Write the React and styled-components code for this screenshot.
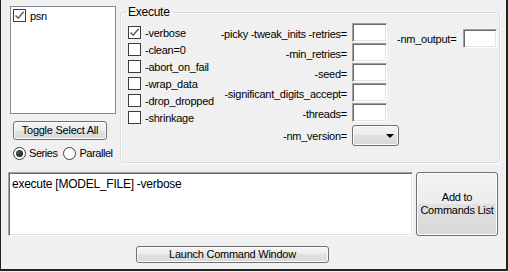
import React from 'react';
import styled, { createGlobalStyle } from 'styled-components';

const GlobalStyle = createGlobalStyle`
  html, body {
    margin: 0;
    padding: 0;
    background: #f0f0f0;
  }
  body {
    font-family: "Liberation Sans", Arial, sans-serif;
    font-size: 11px;
    letter-spacing: -0.25px;
    color: #000;
  }
`;

const buttonFace = 'linear-gradient(#f4f4f4 0%, #ececec 50%, #e1e1e1 50%, #d8d8d8 100%)';

const Frame = styled.div`
  box-sizing: border-box;
  width: 508px;
  height: 271px;
  padding-left: 7px;
  background: #f0f0f0;
  border-left: 1px solid #222;
  border-right: 2px solid #222;
  border-bottom: 2px solid #222;
`;

const TopRow = styled.div`
  display: flex;
  align-items: flex-start;
  height: 163px;
`;

const LeftCol = styled.div`
  flex: none;
  width: 112px;
  padding-top: 6px;
  display: flex;
  flex-direction: column;
`;

const ListBox = styled.div`
  box-sizing: border-box;
  width: 106px;
  height: 108px;
  margin-left: 2px;
  padding: 1px 2px;
  background: #fff;
  border: 1px solid #828790;
`;

const ListItem = styled.label`
  display: flex;
  align-items: center;
  gap: 4px;
  height: 15px;
`;

const Box = styled.span`
  box-sizing: border-box;
  flex: none;
  width: 13px;
  height: 13px;
  border: 1px solid #3c3c3c;
  background: #fff;
  display: flex;
  align-items: center;
  justify-content: center;
`;

const Button = styled.div`
  box-sizing: border-box;
  display: flex;
  flex-direction: column;
  align-items: center;
  justify-content: center;
  width: ${({ w }) => w}px;
  height: ${({ h }) => h}px;
  border: 1px solid #707070;
  border-radius: 3px;
  background: ${buttonFace};
  box-shadow: inset 0 0 0 1px #fcfcfc;
  line-height: 13px;
  text-align: center;
  white-space: nowrap;
`;

const ToggleButton = styled(Button)`
  margin: 7px 0 0 5px;
`;

const RadioRow = styled.div`
  display: flex;
  align-items: center;
  gap: 6px;
  margin: 6px 0 0 5px;
  height: 14px;
  white-space: nowrap;
  letter-spacing: -0.45px;
`;

const RadioItem = styled.label`
  display: flex;
  align-items: center;
  gap: 3px;
`;

const RadioCircle = styled.span`
  box-sizing: border-box;
  flex: none;
  width: 13px;
  height: 13px;
  border-radius: 50%;
  border: 1px solid #3c3c3c;
  background: #fff;
  display: flex;
  align-items: center;
  justify-content: center;

  &::after {
    content: '';
    display: ${({ checked }) => (checked ? 'block' : 'none')};
    width: 7px;
    height: 7px;
    border-radius: 50%;
    background: radial-gradient(circle at 35% 35%, #555, #111);
  }
`;

const GroupBox = styled.fieldset`
  box-sizing: border-box;
  flex: none;
  width: 380px;
  height: 158px;
  min-width: 0;
  margin: 5px 0 0 0;
  padding: 0;
  border: 1px solid #d5dfe5;
  border-radius: 3px;
  box-shadow: inset 1px 1px 0 #fff, 1px 1px 0 #fff;
`;

const Legend = styled.legend`
  margin-left: 5px;
  padding: 0 2px;
  font-size: 12px;
  line-height: 14px;
`;

const GroupBody = styled.div`
  display: flex;
  align-items: flex-start;
  padding-left: 7px;
  white-space: nowrap;
`;

const CheckCol = styled.div`
  width: 87px;
  margin-top: 7px;
  display: flex;
  flex-direction: column;
  gap: 4px;
`;

const CheckRow = styled.label`
  display: flex;
  align-items: center;
  gap: 4px;
  height: 13px;
`;

const ParamGrid = styled.div`
  display: grid;
  grid-template-columns: 132px 35px;
  grid-template-rows: repeat(5, 20px) 23px;
  column-gap: 5px;
  margin-top: 4px;
`;

const ParamLabel = styled.span`
  align-self: center;
  text-align: right;
  padding-top: 2px;
`;

const TextBox = styled.div`
  box-sizing: border-box;
  flex: none;
  width: ${({ w }) => w}px;
  height: ${({ h }) => h}px;
  background: #fff;
  border-top: 1px solid #a0a0a0;
  border-left: 1px solid #a0a0a0;
  border-right: 1px solid #fff;
  border-bottom: 1px solid #fff;
  box-shadow: inset 1px 1px 0 #696969, inset -1px -1px 0 #e3e3e3;
`;

const ParamBox = styled(TextBox)`
  align-self: start;
`;

const Dropdown = styled.div`
  box-sizing: border-box;
  align-self: end;
  width: 47px;
  height: 21px;
  border: 1px solid #707070;
  border-radius: 3px;
  background: ${buttonFace};
  box-shadow: inset 0 0 0 1px #fcfcfc;
  display: flex;
  align-items: center;
  justify-content: flex-end;
  padding-right: 4px;
`;

const Arrow = styled.span`
  width: 0;
  height: 0;
  border-left: 4px solid transparent;
  border-right: 4px solid transparent;
  border-top: 4px solid #000;
`;

const OutputField = styled.div`
  display: flex;
  align-items: center;
  gap: 7px;
  margin: 10px 0 0 10px;
`;

const BottomRow = styled.div`
  display: flex;
  gap: 3px;
  margin-top: 9px;
`;

const CommandBox = styled(TextBox)`
  padding: 4px 3px;
  font-size: 12px;
  line-height: 14px;
`;

const LaunchButton = styled(Button)`
  margin: 10px 0 0 128px;
`;

const Check = ({ checked }) => (
  <Box>
    {checked && (
      <svg width="11" height="11" viewBox="0 0 11 11">
        <path d="M1.5 5.5 L4.2 8.3 L9.6 1.8" fill="none" stroke="#5a5a5a" strokeWidth="1.4" />
      </svg>
    )}
  </Box>
);

const flags = [
  { name: '-verbose', checked: true },
  { name: '-clean=0' },
  { name: '-abort_on_fail' },
  { name: '-wrap_data' },
  { name: '-drop_dropped' },
  { name: '-shrinkage' },
];

const params = [
  '-picky -tweak_inits -retries=',
  '-min_retries=',
  '-seed=',
  '-significant_digits_accept=',
  '-threads=',
];

const App = () => (
  <>
    <GlobalStyle />
    <Frame>
      <TopRow>
        <LeftCol>
          <ListBox>
            <ListItem>
              <Check checked />
              psn
            </ListItem>
          </ListBox>
          <ToggleButton w={94} h={19}>Toggle Select All</ToggleButton>
          <RadioRow>
            <RadioItem>
              <RadioCircle checked />
              Series
            </RadioItem>
            <RadioItem>
              <RadioCircle />
              Parallel
            </RadioItem>
          </RadioRow>
        </LeftCol>
        <GroupBox>
          <Legend>Execute</Legend>
          <GroupBody>
            <CheckCol>
              {flags.map(f => (
                <CheckRow key={f.name}>
                  <Check checked={f.checked} />
                  {f.name}
                </CheckRow>
              ))}
            </CheckCol>
            <ParamGrid>
              {params.map(p => (
                <React.Fragment key={p}>
                  <ParamLabel>{p}</ParamLabel>
                  <ParamBox w={35} h={19} />
                </React.Fragment>
              ))}
              <ParamLabel>-nm_version=</ParamLabel>
              <Dropdown>
                <Arrow />
              </Dropdown>
            </ParamGrid>
            <OutputField>
              <span>-nm_output=</span>
              <TextBox w={34} h={19} />
            </OutputField>
          </GroupBody>
        </GroupBox>
      </TopRow>
      <BottomRow>
        <CommandBox w={405} h={64}>execute [MODEL_FILE] -verbose</CommandBox>
        <Button w={82} h={64}>
          <span>Add to</span>
          <span>Commands List</span>
        </Button>
      </BottomRow>
      <LaunchButton w={193} h={17}>Launch Command Window</LaunchButton>
    </Frame>
  </>
);

export default App;
